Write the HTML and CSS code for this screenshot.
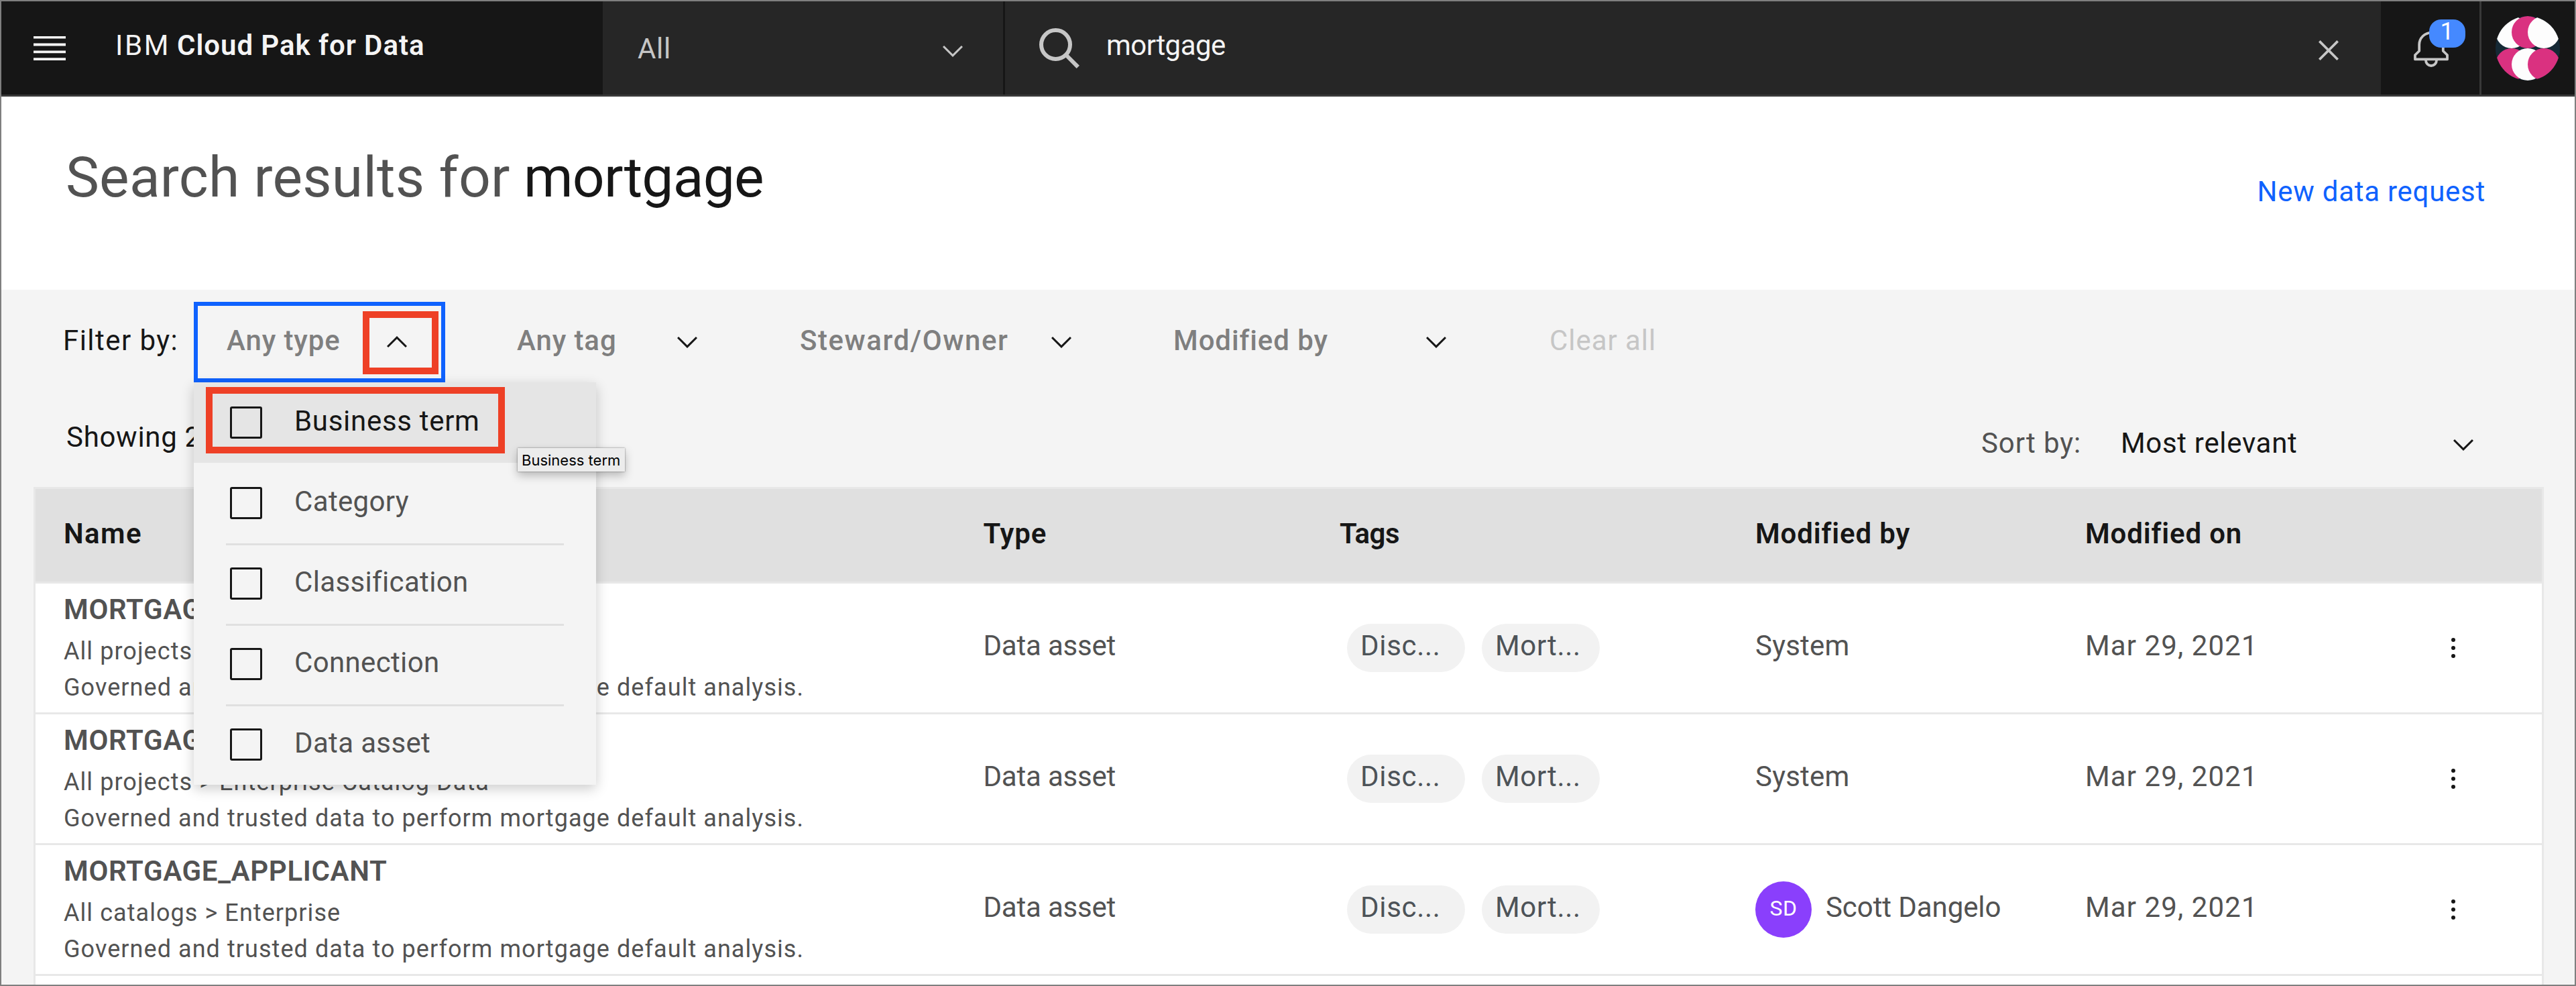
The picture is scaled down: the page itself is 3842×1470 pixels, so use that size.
FILE: index.html
```
<!DOCTYPE html>
<html lang="en">
<head>
<meta charset="utf-8">
<title>IBM Cloud Pak for Data</title>
<link rel="stylesheet" href="styles.css">
</head>
<body>
<svg class="defs" width="0" height="0">
  <symbol id="chevron" viewBox="0 0 16 16"><path d="M8 11 3 6l.7-.7L8 9.6l4.3-4.3.7.7z"/></symbol>
  <symbol id="chevron-up" viewBox="0 0 16 16"><path d="m8 5 5 5-.7.7L8 6.4l-4.3 4.3L3 10z"/></symbol>
  <symbol id="kebab" viewBox="0 0 48 48"><circle cx="24" cy="12" r="3"/><circle cx="24" cy="24" r="3"/><circle cx="24" cy="36" r="3"/></symbol>
</svg>
<div class="page">
  <header class="topbar">
    <div class="brand">
      <svg class="menu-icon" viewBox="0 0 48 36"><path d="M0 0h48v3.6H0zM0 10.6h48v3.8H0zM0 21.4h48v3.8H0zM0 32.3h48v3.7H0z"/></svg>
      <div class="brand-name"><span class="brand-ibm">IBM</span><span class="brand-product">Cloud Pak for Data</span></div>
    </div>
    <div class="scope"><span class="scope-text">All</span><svg class="icon scope-icon"><use href="#chevron"/></svg></div>
    <div class="search">
      <svg class="search-icon" viewBox="0 0 60 60"><circle cx="24.5" cy="24.5" r="21.5"/><path d="m40.5 40.5 17.3 17.3"/></svg>
      <span class="search-text">mortgage</span>
      <svg class="close-icon" viewBox="0 0 32 32"><path d="M24 9.4 22.6 8 16 14.6 9.4 8 8 9.4l6.6 6.6L8 22.6 9.4 24l6.6-6.6 6.6 6.6 1.4-1.4-6.6-6.6z"/></svg>
    </div>
    <div class="notifications">
      <svg class="bell" viewBox="0 0 52 56"><path d="M8.2 32V22.6a17.8 17.8 0 0 1 35.6 0V32L50 38v6.4H2V38zM18 46a8 8 0 0 0 16 0"/></svg>
      <span class="badge">1</span>
    </div>
    <div class="account">
      <svg class="avatar" viewBox="0 0 96 96">
        <clipPath id="round"><circle cx="48" cy="48" r="48"/></clipPath>
        <g clip-path="url(#round)">
          <path fill="#152935" d="M0 0h96v96H0z"/>
          <g fill="#fdfdfd"><circle cx="24" cy="24" r="24"/></g>
          <g fill="#da3180"><circle cx="48" cy="24" r="24"/><circle cx="24" cy="72" r="24"/></g>
          <g fill="#fdfdfd"><circle cx="72" cy="24" r="24"/><circle cx="48" cy="72" r="24"/></g>
          <g fill="#da3180"><circle cx="72" cy="72" r="24"/></g>
        </g>
      </svg>
    </div>
  </header>

  <section class="title">
    <h1><span class="title-lead">Search results for</span><span class="title-term">mortgage</span></h1>
    <a class="request">New data request</a>
  </section>

  <section class="filters">
    <span class="filter-label">Filter by:</span>
    <div class="select select-open">
      <span>Any type</span><svg class="icon"><use href="#chevron-up"/></svg>
      <ul class="menu">
        <li class="option option-active"><i class="checkbox"></i><span>Business term</span></li>
        <li class="option option-first"><i class="checkbox"></i><span>Category</span></li>
        <li class="option"><i class="checkbox"></i><span>Classification</span></li>
        <li class="option"><i class="checkbox"></i><span>Connection</span></li>
        <li class="option"><i class="checkbox"></i><span>Data asset</span></li>
      </ul>
      <div class="highlight highlight-arrow"></div>
      <div class="highlight highlight-option"></div>
      <div class="tooltip">Business term</div>
    </div>
    <div class="select"><span>Any tag</span><svg class="icon"><use href="#chevron"/></svg></div>
    <div class="select select-owner"><span>Steward/Owner</span><svg class="icon"><use href="#chevron"/></svg></div>
    <div class="select"><span>Modified by</span><svg class="icon"><use href="#chevron"/></svg></div>
    <span class="clear">Clear all</span>
  </section>

  <section class="summary">
    <span class="count">Showing 2</span>
    <div class="sort"><span class="sort-label">Sort by:</span><span class="sort-value">Most relevant</span><svg class="icon"><use href="#chevron"/></svg></div>
  </section>

  <section class="table">
    <div class="row head"><span class="h-name">Name</span><span>Type</span><span class="h-tags">Tags</span><span>Modified by</span><span>Modified on</span></div>
    <div class="row">
      <div class="asset"><b>MORTGAGE_APPLICANT</b><p>All projects &gt; Enterprise Catalog Data</p><p>Governed and trusted data to perform mortgage default analysis.</p></div>
      <span class="cell kind">Data asset</span>
      <div class="tags"><span class="tag">Disc...</span><span class="tag">Mort...</span></div>
      <span class="cell">System</span>
      <span class="cell date">Mar 29, 2021</span>
      <svg class="icon"><use href="#kebab"/></svg>
    </div>
    <div class="row">
      <div class="asset"><b>MORTGAGE_APPLICANT</b><p>All projects &gt; Enterprise Catalog Data</p><p>Governed and trusted data to perform mortgage default analysis.</p></div>
      <span class="cell kind">Data asset</span>
      <div class="tags"><span class="tag">Disc...</span><span class="tag">Mort...</span></div>
      <span class="cell">System</span>
      <span class="cell date">Mar 29, 2021</span>
      <svg class="icon"><use href="#kebab"/></svg>
    </div>
    <div class="row">
      <div class="asset"><b>MORTGAGE_APPLICANT</b><p>All catalogs &gt; Enterprise</p><p>Governed and trusted data to perform mortgage default analysis.</p></div>
      <span class="cell kind">Data asset</span>
      <div class="tags"><span class="tag">Disc...</span><span class="tag">Mort...</span></div>
      <div class="user"><span class="initials">SD</span><span class="cell user-name">Scott Dangelo</span></div>
      <span class="cell date">Mar 29, 2021</span>
      <svg class="icon"><use href="#kebab"/></svg>
    </div>
    <div class="row"></div>
  </section>
</div>
</body>
</html>
```
FILE: styles.css
```
* { box-sizing: border-box; }
body {
  margin: 0;
  font: 400 42px/60px Roboto, "Liberation Sans", sans-serif;
  letter-spacing: 0.7px;
  color: #161616;
  white-space: nowrap;
}
h1, p, ul { margin: 0; padding: 0; font-weight: 400; list-style: none; }
.defs { position: absolute; }
.icon { flex: none; width: 48px; height: 48px; fill: currentColor; }
.page {
  width: 3842px;
  height: 1470px;
  border: 2px solid #7f7f7f;
  background: #f4f4f4;
  overflow: hidden;
}

/* Top bar */
.topbar {
  display: flex;
  height: 142px;
  background: #262626;
  border-bottom: 3px solid #393939;
  color: #f4f4f4;
}
.brand {
  display: flex;
  align-items: center;
  gap: 74px;
  width: 897px;
  padding-left: 48px;
  background: #161616;
}
.menu-icon { width: 48px; height: 36px; fill: #f4f4f4; }
.brand-name { display: flex; padding-bottom: 8px; }
.brand-ibm { width: 92px; letter-spacing: 2.6px; }
.brand-product { font-weight: 600; letter-spacing: 0.95px; }
.scope {
  display: flex;
  align-items: center;
  justify-content: space-between;
  width: 600px;
  padding: 0 51px 0 52px;
  border-right: 3px solid #161616;
  color: #c6c6c6;
}
.scope-text { padding-top: 2px; }
.scope-icon { margin-top: 9px; }
.search { display: flex; align-items: center; flex: 1; padding: 0 48px 0 51px; }
.search-icon { width: 60px; height: 60px; fill: none; stroke: #c6c6c6; stroke-width: 6; }
.search-text { flex: 1; padding: 0 0 8px 40px; letter-spacing: -0.54px; }
.close-icon { width: 60px; height: 60px; margin-top: 7px; fill: #c6c6c6; }
.notifications {
  position: relative;
  width: 150px;
  padding: 42px 0 0 49px;
  background: #161616;
  border-right: 3px solid #393939;
}
.bell { display: block; width: 52px; height: 56px; fill: none; stroke: #c6c6c6; stroke-width: 3.8; stroke-linejoin: round; }
.badge {
  position: absolute;
  left: 72px;
  top: 27px;
  width: 54px;
  height: 42px;
  border-radius: 18px;
  background: #4589ff;
  color: #fff;
  font-size: 36px;
  line-height: 37px;
  text-align: center;
}
.account { display: flex; align-items: center; width: 139px; padding-left: 21px; background: #161616; }
.avatar { width: 96px; height: 96px; }

/* Page title */
.title {
  display: flex;
  justify-content: space-between;
  height: 288px;
  padding: 71px 133px 0 96px;
  background: #fff;
}
h1 { display: flex; font-size: 84px; line-height: 100px; }
.title-lead { width: 683px; color: #525252; letter-spacing: 0.24px; }
.title-term { letter-spacing: -0.8px; }
.request { margin-top: 41px; color: #0f62fe; letter-spacing: 0.74px; }

/* Filters */
.filters {
  display: grid;
  grid-template-columns: 195px 375px 58px 375px 46px 512px 46px 513px 97px auto;
  align-items: center;
  height: 138px;
  padding: 18px 0 0 92px;
}
.filter-label { padding-bottom: 5px; letter-spacing: 1.45px; }
.select {
  position: relative;
  display: flex;
  align-items: center;
  justify-content: space-between;
  height: 120px;
  padding: 0 48px 0 49px;
  letter-spacing: 0.9px;
}
.select > span { padding-bottom: 5px; font-weight: 500; color: #7f7f7f; }
.select:nth-of-type(2) { grid-column: 4; }
.select:nth-of-type(3) { grid-column: 6; }
.select:nth-of-type(4) { grid-column: 8; }
.select-owner { padding-left: 50px; letter-spacing: 1.57px; }
.select-open { box-shadow: inset 0 0 0 6px #0f62fe; }
.clear { grid-column: 10; padding-bottom: 5px; color: #c6c6c6; letter-spacing: 0.95px; }
.menu {
  position: absolute;
  z-index: 1;
  left: 0;
  top: 120px;
  width: 600px;
  background: #f4f4f4;
  box-shadow: 0 6px 18px rgba(0, 0, 0, 0.2);
  letter-spacing: 0.35px;
}
.option {
  position: relative;
  display: flex;
  align-items: center;
  gap: 48px;
  height: 120px;
  padding-left: 54px;
  color: #525252;
}
.option span { padding-bottom: 5px; }
.option + .option:not(.option-first)::before {
  content: "";
  position: absolute;
  left: 48px;
  right: 48px;
  top: 0;
  height: 3px;
  background: #e0e0e0;
}
.option-active { background: #e5e5e5; color: #161616; letter-spacing: 0.7px; }
.checkbox { width: 48px; height: 48px; border: 3px solid #161616; border-radius: 3px; }
.highlight { position: absolute; z-index: 2; border: 10px solid #ee4026; }
.highlight-arrow { left: 252px; top: 14px; width: 113px; height: 94px; }
.highlight-option { left: 18px; top: 127px; width: 446px; height: 99px; }
.tooltip {
  position: absolute;
  z-index: 3;
  left: 483px;
  top: 218px;
  width: 160px;
  height: 35px;
  padding-left: 6px;
  background: #ececec;
  box-shadow: 0 0 2px rgba(0, 0, 0, 0.5), 0 6px 14px rgba(0, 0, 0, 0.25);
  color: #000;
  font: 400 22px/36px Inter, sans-serif;
  letter-spacing: 0;
}

/* Result summary */
.summary { display: flex; justify-content: space-between; height: 156px; padding: 52px 142px 0 97px; }
.sort { display: flex; width: 743px; padding-top: 9px; }
.sort-label { width: 208px; color: #525252; letter-spacing: 0.92px; }
.sort-value { flex: 1; letter-spacing: 0.68px; }
.sort .icon { margin-top: 8px; }

/* Results table */
.table { width: 3744px; margin-left: 48px; border: 3px solid #e8e8e8; }
.row {
  display: grid;
  grid-template-columns: 1371.5px 531.5px 620px 492px 525px 1fr;
  align-items: center;
  height: 195px;
  padding-left: 42px;
  background: #fff;
  border-bottom: 3px solid #e8e8e8;
}
.head { height: 141px; background: #e0e0e0; font-weight: 600; letter-spacing: 0.85px; }
.head span { padding-bottom: 5px; }
.h-name { letter-spacing: 1.4px; }
.h-tags { letter-spacing: -0.45px; }
.asset { align-self: start; padding-top: 9px; color: #525252; }
.asset b { display: block; margin-bottom: 5px; font-weight: 600; letter-spacing: 0.65px; }
.asset p { font-size: 36px; line-height: 54px; letter-spacing: 1.06px; }
.cell { padding-bottom: 6px; color: #525252; letter-spacing: 0.2px; }
.kind { letter-spacing: -0.2px; }
.date { letter-spacing: 1.1px; }
.tags { display: flex; gap: 25px; padding-left: 11px; }
.tag {
  width: 176px;
  height: 72px;
  padding-left: 20px;
  border-radius: 36px;
  background: #f2f2f2;
  color: #4d5358;
  line-height: 66px;
}
.user { display: flex; align-items: center; gap: 21px; }
.user-name { letter-spacing: -0.08px; }
.initials {
  width: 84px;
  height: 84px;
  border-radius: 50%;
  background: #8a3ffc;
  color: #fff;
  font-size: 32px;
  line-height: 80px;
  text-align: center;
  letter-spacing: 0.6px;
}
```
